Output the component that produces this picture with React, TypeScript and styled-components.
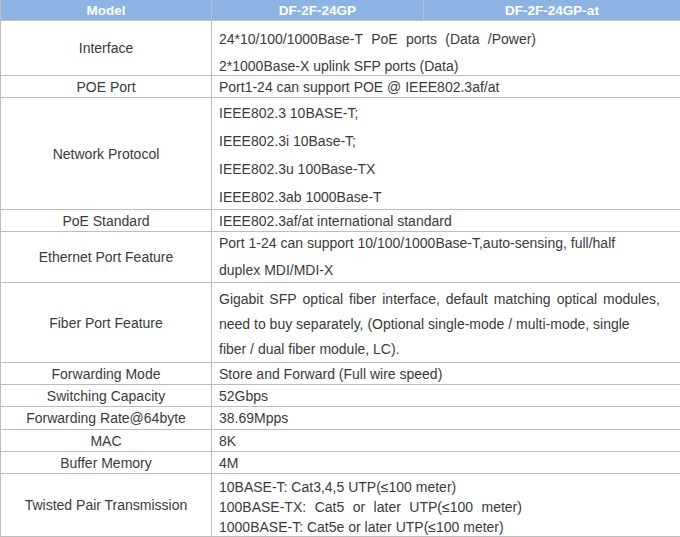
import React from "react";
import styled, { createGlobalStyle } from "styled-components";

const GlobalStyle = createGlobalStyle`
  html, body {
    margin: 0;
    padding: 0;
    background: #ffffff;
  }
  body {
    font-family: "Liberation Sans", Arial, sans-serif;
  }
`;

const BORDER = "#bdbdbd";

const Table = styled.div`
  width: 680px;
  border-left: 1px solid ${BORDER};
  box-sizing: border-box;
  font-family: "Liberation Sans", Arial, sans-serif;
  font-size: 14px;
  color: #3a3a3a;
`;

const HeaderRow = styled.div`
  display: grid;
  grid-template-columns: 211px 212px 1fr;
  height: 20px;
  background: #8db3e2;
  border-bottom: 1px solid ${BORDER};
`;

const HeaderCell = styled.div<{ $last?: boolean }>`
  display: flex;
  align-items: center;
  justify-content: center;
  color: #ffffff;
  font-weight: bold;
  font-size: 13.5px;
  border-right: ${(p) => (p.$last ? "none" : "1px solid #a9c0df")};
`;

const Row = styled.div<{ $h: number }>`
  display: grid;
  grid-template-columns: 211px 1fr;
  height: ${(p) => p.$h}px;
  border-bottom: 1px solid ${BORDER};
`;

const Label = styled.div`
  display: flex;
  align-items: center;
  justify-content: center;
  text-align: center;
  border-right: 1px solid ${BORDER};
  white-space: nowrap;
`;

const Value = styled.div<{ $pt?: number; $gap?: number }>`
  display: flex;
  flex-direction: column;
  justify-content: ${(p) => (p.$pt === undefined ? "center" : "flex-start")};
  padding-top: ${(p) => p.$pt ?? 0}px;
  padding-left: 7px;
  gap: ${(p) => p.$gap ?? 0}px;
  box-sizing: border-box;
  min-width: 0;
`;

const Line = styled.div`
  line-height: 16px;
  height: 16px;
  white-space: pre;
`;

// a line spread out to a given width, word by word (justified in the original)
const SpreadLine = styled.div<{ $w: number }>`
  display: flex;
  justify-content: space-between;
  width: ${(p) => p.$w}px;
  line-height: 16px;
  height: 16px;
  white-space: pre;
`;

type LineSpec = string | { t: string; w: number };

interface Spec {
  label: string;
  h: number;
  lines: LineSpec[];
  pt?: number;
  gap?: number;
}

const rows: Spec[] = [
  {
    label: "Interface",
    h: 54,
    pt: 10,
    gap: 11,
    lines: [
      { t: "24*10/100/1000Base-T PoE ports (Data /Power)", w: 317 },
      "2*1000Base-X uplink SFP ports (Data)",
    ],
  },
  { label: "POE Port", h: 21, lines: ["Port1-24 can support POE @ IEEE802.3af/at"] },
  {
    label: "Network Protocol",
    h: 111,
    pt: 7,
    gap: 12,
    lines: [
      "IEEE802.3 10BASE-T;",
      "IEEE802.3i 10Base-T;",
      "IEEE802.3u 100Base-TX",
      "IEEE802.3ab 1000Base-T",
    ],
  },
  { label: "PoE Standard", h: 21, lines: ["IEEE802.3af/at international standard"] },
  {
    label: "Ethernet Port Feature",
    h: 50,
    pt: 3,
    gap: 11,
    lines: [
      "Port 1-24 can support 10/100/1000Base-T,auto-sensing, full/half",
      "duplex MDI/MDI-X",
    ],
  },
  {
    label: "Fiber Port Feature",
    h: 79,
    pt: 8,
    gap: 9,
    lines: [
      { t: "Gigabit SFP optical fiber interface, default matching optical modules,", w: 441 },
      "need to buy separately, (Optional single-mode / multi-mode, single",
      "fiber / dual fiber module, LC).",
    ],
  },
  { label: "Forwarding Mode", h: 21, lines: ["Store and Forward (Full wire speed)"] },
  { label: "Switching Capacity", h: 21, lines: ["52Gbps"] },
  { label: "Forwarding Rate@64byte", h: 22, lines: ["38.69Mpps"] },
  { label: "MAC", h: 21, lines: ["8K"] },
  { label: "Buffer Memory", h: 21, lines: ["4M"] },
  {
    label: "Twisted Pair Transmission",
    h: 62,
    pt: 5,
    gap: 4,
    lines: [
      "10BASE-T: Cat3,4,5 UTP(≤100 meter)",
      { t: "100BASE-TX: Cat5 or later UTP(≤100 meter)", w: 303 },
      "1000BASE-T: Cat5e or later UTP(≤100 meter)",
    ],
  },
];

function renderLine(l: LineSpec) {
  if (typeof l === "string") return <Line key={l}>{l}</Line>;
  return (
    <SpreadLine key={l.t} $w={l.w}>
      {l.t.split(" ").map((word, i) => (
        <span key={i}>{word}</span>
      ))}
    </SpreadLine>
  );
}

export default function App(): JSX.Element {
  return (
    <>
      <GlobalStyle />
      <Table>
        <HeaderRow>
          <HeaderCell>Model</HeaderCell>
          <HeaderCell>DF-2F-24GP</HeaderCell>
          <HeaderCell $last>DF-2F-24GP-at</HeaderCell>
        </HeaderRow>
        {rows.map((r) => (
          <Row key={r.label} $h={r.h}>
            <Label>{r.label}</Label>
            <Value $pt={r.pt} $gap={r.gap}>
              {r.lines.map(renderLine)}
            </Value>
          </Row>
        ))}
      </Table>
    </>
  );
}
